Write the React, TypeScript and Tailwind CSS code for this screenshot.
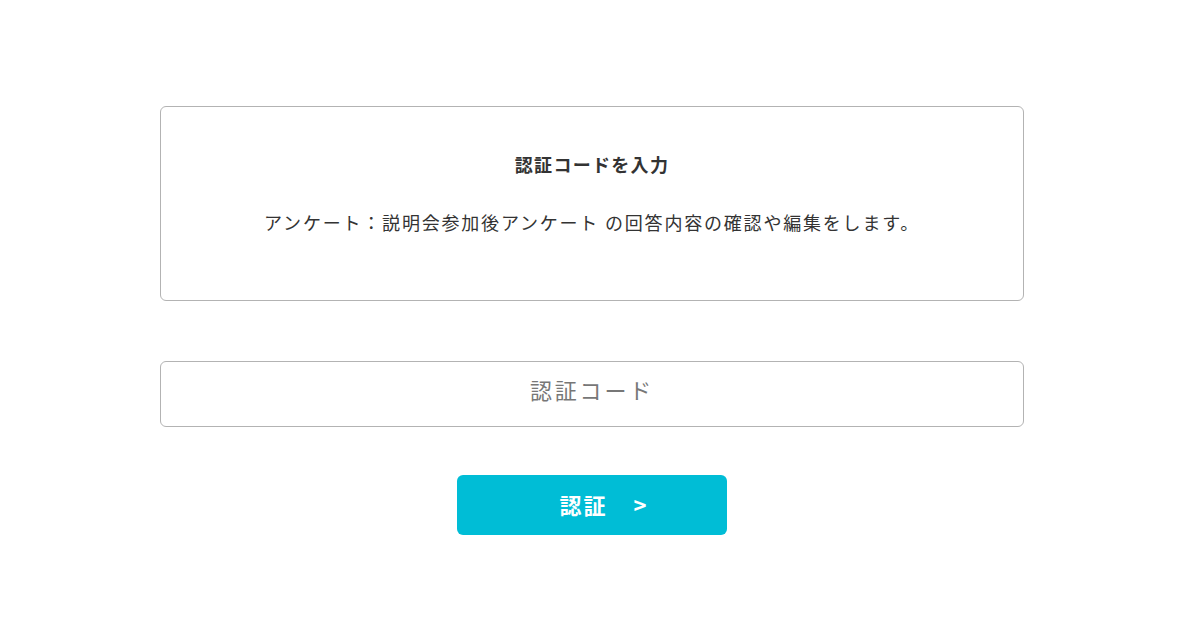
import React from 'react';

const font = { fontFamily: '"Noto Sans CJK JP", "Noto Sans", sans-serif' };

const App: React.FC = () => {
  return (
    <div className="min-h-screen bg-white text-[#333]" style={font}>
      <div className="ml-[160px] w-[864px] pt-[106px]">
        {/* Info card */}
        <div className="h-[195px] rounded-md border border-[#b3b3b3] flex flex-col items-center pt-[44px]">
          <h1 className="text-[18px] font-bold tracking-[1.3px] leading-[26px]">認証コードを入力</h1>
          <p className="mt-[32px] text-[18px] tracking-[1.8px] leading-[26px]">
            アンケート：説明会参加後アンケート の回答内容の確認や編集をします。
          </p>
        </div>

        {/* Code input */}
        <input
          type="text"
          placeholder="認証コード"
          className="mt-[60px] block w-full h-[66px] pb-[10px] rounded-md border border-[#b3b3b3] text-center text-[22px] tracking-[2.8px] placeholder:text-[#777] outline-none"
          style={font}
        />

        {/* Submit */}
        <div className="mt-[48px] flex justify-center">
          <button className="w-[270px] h-[60px] pl-[22px] pb-[2px] rounded-md bg-[#00bdd6] text-white text-[22px] font-bold flex items-center justify-center">
            <span className="tracking-[2px]">認証</span>
            <span className="ml-[26px]">&gt;</span>
          </button>
        </div>
      </div>
    </div>
  );
};

export default App;
